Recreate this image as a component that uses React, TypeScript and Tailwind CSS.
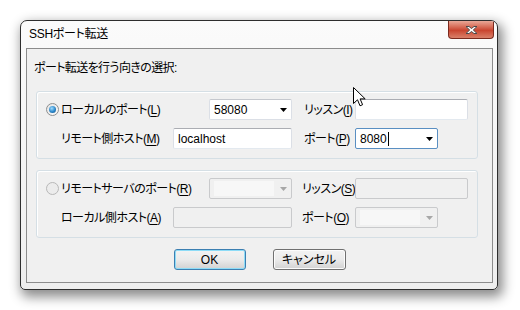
import type { ReactNode } from "react";

const FONT = "font-['Liberation_Sans','Noto_Sans_CJK_JP',sans-serif]";

function Mn({ children }: { children: ReactNode }) {
  return <span className="underline underline-offset-[2px] decoration-1">{children}</span>;
}

function Label({ w, children, className = "" }: { w: string; children: ReactNode; className?: string }) {
  return (
    <span className={`${w} shrink-0 overflow-visible whitespace-nowrap text-[12px] leading-[16px] tracking-[-0.5px] ${className}`}>
      {children}
    </span>
  );
}

function Radio({ checked, disabled }: { checked?: boolean; disabled?: boolean }) {
  return (
    <span
      className={`flex h-[13px] w-[13px] shrink-0 items-center justify-center rounded-full border ${
        disabled ? "border-[#b8b8b8] bg-[#ececec]" : "border-[#8e8f8f] bg-gradient-to-br from-[#e4e4e4] to-[#fafafa]"
      }`}
    >
      {checked && (
        <span className="h-[7px] w-[7px] rounded-full bg-[radial-gradient(circle_at_40%_35%,#9fdcff,#2a86c9_55%,#15507f)]" />
      )}
    </span>
  );
}

function Arrow({ disabled }: { disabled?: boolean }) {
  return (
    <svg width="7" height="4" viewBox="0 0 7 4" className="shrink-0">
      <path d="M0 0H7L3.5 4Z" fill={disabled ? "#a7a7a7" : "#000"} />
    </svg>
  );
}

function TextBox({ w, value, disabled }: { w: string; value?: string; disabled?: boolean }) {
  return (
    <div
      className={`flex h-[21px] ${w} shrink-0 items-center rounded-[2px] border px-[4px] text-[12px] ${
        disabled
          ? "border-[#c9cacc] bg-[#f0f0f0]"
          : "border-[#abadb3] border-x-[#dbdfe6] border-b-[#e3e9ef] bg-white"
      }`}
    >
      {value}
    </div>
  );
}

function Combo({
  value,
  disabled,
  focused,
}: {
  value?: string;
  disabled?: boolean;
  focused?: boolean;
}) {
  return (
    <div
      className={`flex h-[21px] w-[83px] shrink-0 items-center justify-between rounded-[2px] border pl-[4px] pr-[4px] text-[12px] ${
        disabled
          ? "border-[#c9cacc] bg-[#f0f0f0]"
          : focused
          ? "border-[#5a8fc2] bg-white"
          : "border-[#dbdfe6] border-t-[#c5c8ce] bg-white"
      }`}
    >
      {disabled ? (
        <span className="h-[15px] w-[60px] bg-[#f7f7f7]" />
      ) : (
        <span className="flex items-center">
          {value}
          {focused && <span className="ml-[1px] h-[14px] w-[1px] bg-black" />}
        </span>
      )}
      <Arrow disabled={disabled} />
    </div>
  );
}

function Group({ children }: { children: ReactNode }) {
  return (
    <div className="flex h-[68px] w-[442px] flex-col gap-[8px] rounded-[3px] border border-[#d5dfe5] pt-[7px] shadow-[inset_1px_1px_0_#fff]">
      {children}
    </div>
  );
}

function Button({ children, primary }: { children: ReactNode; primary?: boolean }) {
  return (
    <div
      className={`flex h-[21px] items-center justify-center whitespace-nowrap rounded-[3px] border text-[12px] bg-gradient-to-b from-[#f3f3f3] via-[#ebebeb] via-50% to-[#d2d2d2] ${
        primary
          ? "w-[72px] border-[#3c7fb1] shadow-[inset_0_0_0_1px_#8edcf7]"
          : "w-[73px] border-[#707070] shadow-[inset_0_0_0_1px_#fcfcfc]"
      }`}
    >
      {children}
    </div>
  );
}

export default function App() {
  return (
    <div className={`relative h-[310px] w-[520px] overflow-hidden bg-white text-black [font-feature-settings:'palt'] ${FONT}`}>
      <div className="pl-[20px] pt-[20px]">
        <div className="flex h-[270px] w-[478px] flex-col overflow-hidden rounded-b-[5px] rounded-t-[7px] border border-[#2e2e2e] bg-gradient-to-b from-[#fbfbfb] to-[#eeeeee] shadow-[3px_5px_12px_2px_rgba(0,0,0,0.45)]">
          {/* title bar */}
          <div className="flex h-[27px] shrink-0 items-start justify-between">
            <span className="whitespace-nowrap pl-[8px] pt-[5px] text-[12px] leading-[16px] tracking-[-0.3px]">SSHポート転送</span>
            <div className="mr-[3px] flex h-[18px] w-[46px] items-center justify-center rounded-b-[4px] border border-t-0 border-[#7b2a1e] bg-gradient-to-b from-[#e9a797] via-[#c9442f] via-55% to-[#d97f69]">
              <svg width="13" height="10" viewBox="0 0 13 10">
                <path
                  d="M1 1.5L4 1.5L6.5 3.5L9 1.5L12 1.5L8.3 5L12 8.5L9 8.5L6.5 6.5L4 8.5L1 8.5L4.7 5Z"
                  fill="#fff"
                  stroke="#4b4b4b"
                  strokeWidth="1"
                  strokeLinejoin="round"
                />
              </svg>
            </div>
          </div>

          {/* client */}
          <div className="ml-[5px] mr-[4px] flex h-[235px] shrink-0 flex-col border border-[#8c8c8c] bg-[#f0f0f0] px-[9px]">
            <div className="ml-[-2px] mt-[9px] h-[20px] whitespace-nowrap text-[12px] leading-[20px] tracking-[-0.6px]">
              ポート転送を行う向きの選択:
            </div>

            <div className="mt-[13px]">
              <Group>
                <div className="flex items-center pl-[9px]">
                  <Radio checked />
                  <Label w="w-[148px]" className="ml-[2px]">
                    ローカルのポート(<Mn>L</Mn>)
                  </Label>
                  <Combo value="58080" />
                  <Label w="w-[51px]" className="ml-[12px]">
                    リッスン(<Mn>I</Mn>)
                  </Label>
                  <TextBox w="w-[113px]" />
                </div>
                <div className="flex items-center pl-[24px]">
                  <Label w="w-[112px]">
                    リモート側ホスト(<Mn>M</Mn>)
                  </Label>
                  <TextBox w="w-[119px]" value="localhost" />
                  <Label w="w-[51px]" className="ml-[12px]">
                    ポート(<Mn>P</Mn>)
                  </Label>
                  <Combo value="8080" focused />
                </div>
              </Group>
            </div>

            <div className="mt-[11px]">
              <Group>
                <div className="flex items-center pl-[9px]">
                  <Radio disabled />
                  <Label w="w-[148px]" className="ml-[2px]">
                    リモートサーバのポート(<Mn>R</Mn>)
                  </Label>
                  <Combo disabled />
                  <Label w="w-[53px]" className="ml-[10px]">
                    リッスン(<Mn>S</Mn>)
                  </Label>
                  <TextBox w="w-[113px]" disabled />
                </div>
                <div className="flex items-center pl-[24px]">
                  <Label w="w-[112px]">
                    ローカル側ホスト(<Mn>A</Mn>)
                  </Label>
                  <TextBox w="w-[119px]" disabled />
                  <Label w="w-[53px]" className="ml-[10px]">
                    ポート(<Mn>O</Mn>)
                  </Label>
                  <Combo disabled />
                </div>
              </Group>
            </div>

            <div className="mt-[11px] flex justify-center gap-[27px]">
              <Button primary>OK</Button>
              <Button>キャンセル</Button>
            </div>
          </div>
        </div>
      </div>

      {/* mouse pointer */}
      <svg
        className="absolute left-[353px] top-[87px]"
        width="13"
        height="20"
        viewBox="0 0 13 20"
      >
        <path
          d="M0.5 0.5V16.5L4.5 12.8L7 18.8L9.6 17.7L7.1 11.9H12.2Z"
          fill="#fff"
          stroke="#000"
          strokeWidth="1"
          strokeLinejoin="round"
        />
      </svg>
    </div>
  );
}
